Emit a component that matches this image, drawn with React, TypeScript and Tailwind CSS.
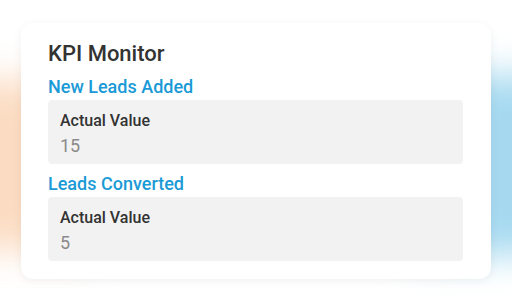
import React from 'react';

const metrics = [
  { name: 'New Leads Added', label: 'Actual Value', value: '15' },
  { name: 'Leads Converted', label: 'Actual Value', value: '5' },
];

export default function App() {
  return (
    <div
      className="relative w-[512px] h-[302px] overflow-hidden bg-white"
      style={{ fontFamily: 'Roboto, "Liberation Sans", sans-serif' }}
    >
      {/* soft glows behind the card */}
      <div className="absolute left-[-60px] top-[80px] w-[180px] h-[170px] rounded-[40px] bg-[#fbdcc2] blur-[18px]" />
      <div className="absolute right-[-60px] top-[75px] w-[180px] h-[180px] rounded-[40px] bg-[#a6d9f0] blur-[18px]" />

      <div className="relative pt-[23px] px-[21px]">
        <div className="bg-white rounded-[12px] shadow-[0_2px_10px_rgba(0,0,0,0.06)] pl-[27px] pr-[28px] pt-[18px] pb-[18px]">
          <h1 className="text-[22px] leading-[26px] font-medium text-[#333333]">KPI Monitor</h1>
          <div className="flex flex-col">
            {metrics.map((m) => (
              <div key={m.name} className="mt-[9px]">
                <div className="text-[18px] leading-[22px] font-medium text-[#1a9ad6]">{m.name}</div>
                <div className="mt-[2px] bg-[#f2f2f2] rounded-[4px] h-[64px] px-[12px] pt-[11px]">
                  <div className="text-[16px] leading-[19px] font-medium text-[#333333]">{m.label}</div>
                  <div className="mt-[5px] text-[18px] leading-[22px] text-[#8a8a8a]">{m.value}</div>
                </div>
              </div>
            ))}
          </div>
        </div>
      </div>
    </div>
  );
}
